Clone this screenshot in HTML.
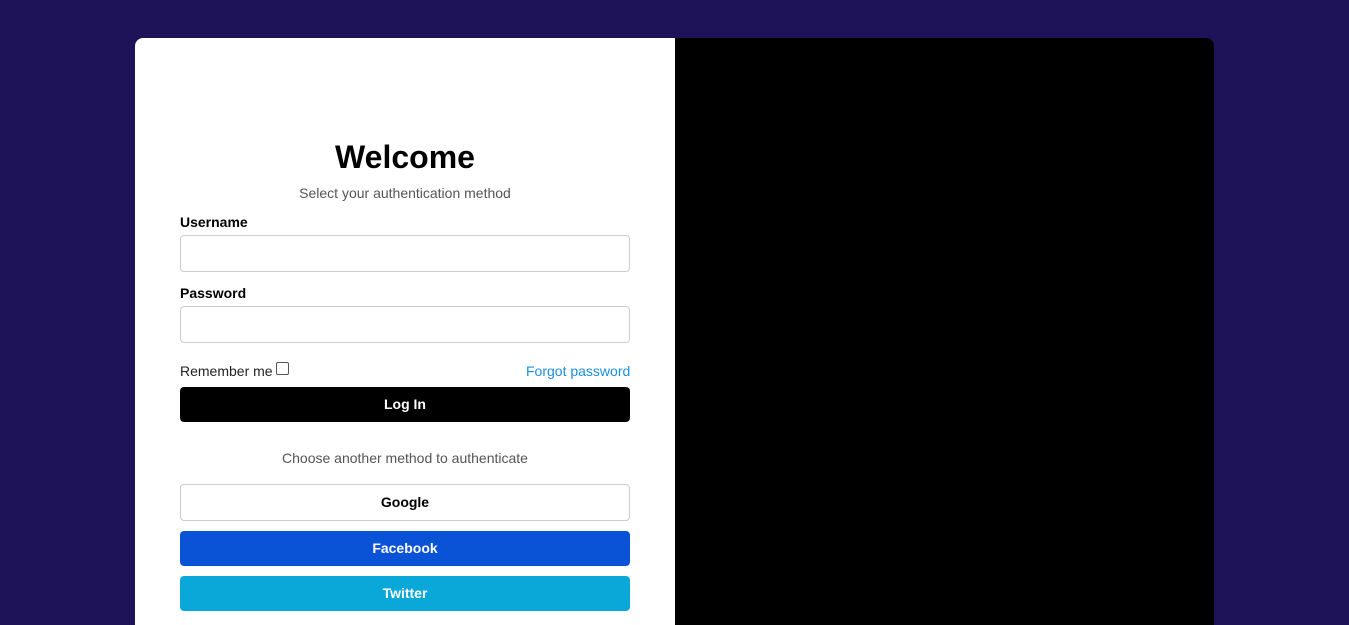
<!DOCTYPE html>
<html style="width:1349px;height:625px;overflow:hidden"><head><style>
*{box-sizing:border-box;margin:0;padding:0}
body{width:1349px;height:625px;background:#1e1259;font-family:"Liberation Sans",sans-serif;position:relative;overflow:hidden}
.card{position:absolute;left:135px;top:38px;width:1079px;height:640px;border-radius:8px;overflow:hidden;background:#000}
.left{position:absolute;left:0;top:0;width:540px;height:100%;background:#fff}
.a{position:absolute}
h1{position:absolute;left:0;width:540px;text-align:center;top:101px;font-size:32px;font-weight:bold;color:#000}
.sub{left:0;width:540px;text-align:center;font-size:14px;color:#555}
.lbl{left:45px;font-size:14px;font-weight:bold;color:#000}
.inp{left:45px;width:450px;height:37px;border:1px solid #ccc;border-radius:4px}
.btn{left:45px;width:450px;height:35px;border-radius:4px;text-align:center;line-height:35px;font-size:14px;font-weight:bold;color:#fff}
</style></head><body>
<div class="card"><div class="left">
<h1>Welcome</h1>
<div class="a sub" style="top:147px">Select your authentication method</div>
<div class="a lbl" style="top:176px">Username</div>
<div class="a inp" style="top:197px"></div>
<div class="a lbl" style="top:247px">Password</div>
<div class="a inp" style="top:268px"></div>
<div class="a" style="left:45px;top:325px;font-size:14px;color:#222">Remember me</div>
<div class="a" style="left:141px;top:324px;width:13px;height:13px;border:1px solid #555;border-radius:2px"></div>
<div class="a" style="left:391px;top:325px;font-size:14px;color:#1a8fe0">Forgot password</div>
<div class="a btn" style="top:349px;background:#000">Log In</div>
<div class="a sub" style="top:412px">Choose another method to authenticate</div>
<div class="a btn" style="top:446px;height:37px;line-height:35px;background:#fff;color:#000;border:1px solid #ccc">Google</div>
<div class="a btn" style="top:493px;background:#0b53d6">Facebook</div>
<div class="a btn" style="top:538px;background:#0aa8d8">Twitter</div>
</div></div>
</body></html>
